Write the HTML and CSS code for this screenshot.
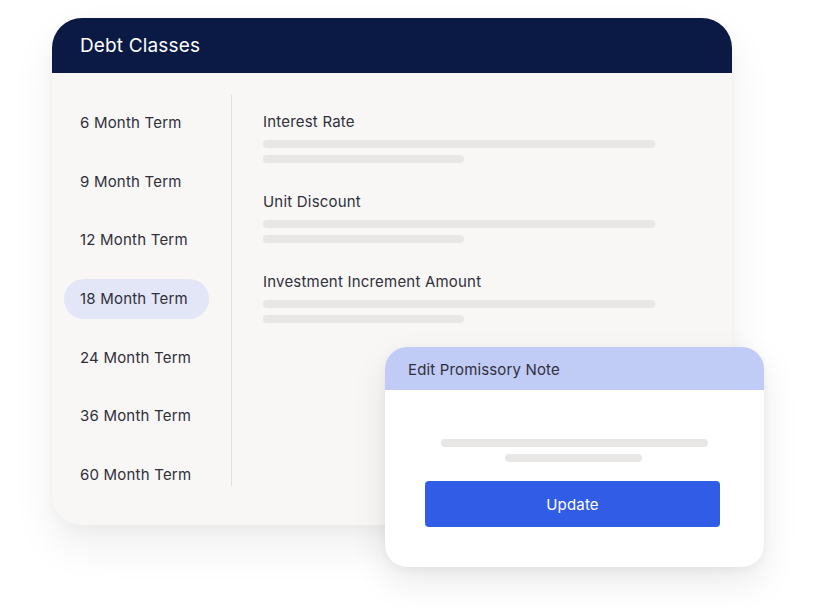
FILE: index.html
```html
<!DOCTYPE html>
<html>
<head>
<meta charset="utf-8">
<link rel="stylesheet" href="styles.css">
</head>
<body>
<div class="stage">
  <div class="card">
    <div class="card-header">Debt Classes</div>
    <div class="card-body">
      <ul class="terms">
        <li class="term">6 Month Term</li>
        <li class="term">9 Month Term</li>
        <li class="term">12 Month Term</li>
        <li class="term active">18 Month Term</li>
        <li class="term">24 Month Term</li>
        <li class="term">36 Month Term</li>
        <li class="term">60 Month Term</li>
      </ul>
      <div class="divider"></div>
      <div class="fields">
        <div class="field">
          <div class="label">Interest Rate</div>
          <div class="bar long"></div>
          <div class="bar short"></div>
        </div>
        <div class="field">
          <div class="label">Unit Discount</div>
          <div class="bar long"></div>
          <div class="bar short"></div>
        </div>
        <div class="field">
          <div class="label">Investment Increment Amount</div>
          <div class="bar long"></div>
          <div class="bar short"></div>
        </div>
      </div>
    </div>
  </div>
  <div class="modal">
    <div class="modal-header">Edit Promissory Note</div>
    <div class="modal-body">
      <div class="mbar mlong"></div>
      <div class="mbar mshort"></div>
      <button class="btn">Update</button>
    </div>
  </div>
</div>
</body>
</html>
```
FILE: styles.css
```css
* { box-sizing: border-box; }
html, body { margin: 0; padding: 0; background: #ffffff; }
body { font-family: Inter, "Noto Sans", sans-serif; color: #30303a; }
.stage { position: relative; width: 815px; height: 608px; overflow: hidden; padding: 18px 0 0 52px; }
.card {
  width: 680px; height: 507px;
  background: #f8f7f6;
  border-radius: 30px 30px 0 30px;
  box-shadow: 0 20px 44px rgba(0,0,0,0.07), 0 4px 14px rgba(0,0,0,0.03);
  overflow: hidden;
}
.card-header {
  height: 55px; background: #0b1a44; color: #ffffff;
  font-size: 19px; line-height: 55px; padding-left: 28px; letter-spacing: 0.15px;
}
.card-body { display: flex; align-items: flex-start; padding-top: 22px; }
.terms { list-style: none; margin: 0; padding: 8px 0 0 12px; width: 179px; display: flex; flex-direction: column; gap: 18.7px; }
.term {
  width: 145px; height: 40px; line-height: 40px; padding-left: 16px;
  font-size: 15px; border-radius: 20px; letter-spacing: 0.2px;
}
.term.active { background: #e3e6f7; }
.divider { width: 1px; height: 391px; background: #e2e0de; }
.fields { padding: 17px 0 0 31px; display: flex; flex-direction: column; gap: 29px; }
.field { display: flex; flex-direction: column; }
.label { font-size: 15px; line-height: 20px; margin-bottom: 8px; letter-spacing: 0.2px; }
.bar { height: 8px; border-radius: 4px; background: #e8e7e5; }
.bar.long { width: 392px; margin-bottom: 7px; }
.bar.short { width: 201px; }
.modal {
  position: absolute; left: 385px; top: 347px; width: 379px; height: 220px;
  background: #ffffff; border-radius: 22px; overflow: hidden;
  box-shadow: 0 14px 36px rgba(0,0,0,0.09), 0 3px 10px rgba(0,0,0,0.04);
}
.modal-header {
  height: 43px; background: #c0cbf6; font-size: 15px; line-height: 45px;
  padding-left: 23px; color: #30303a; letter-spacing: 0.15px;
}
.modal-body { display: flex; flex-direction: column; align-items: center; padding-top: 49px; }
.mbar { height: 8px; border-radius: 4px; background: #e8e7e5; }
.mlong { width: 267px; margin-bottom: 7px; }
.mshort { width: 137px; margin-right: 2px; }
.btn {
  margin-top: 19px; width: 295px; height: 46px; border: none; border-radius: 4px;
  background: #315de6; color: #ffffff; font-family: Inter, "Noto Sans", sans-serif;
  font-size: 15px; letter-spacing: 0.2px; margin-right: 4px;
}
```
